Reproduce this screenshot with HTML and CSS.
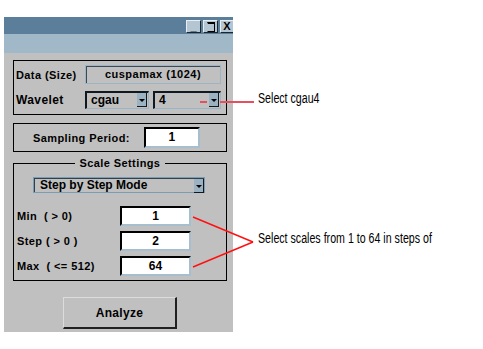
FILE: index.html
```html
<!DOCTYPE html>
<html lang="en">
<head>
  <meta charset="UTF-8">
  <title>Wavelet 1-D Continuous</title>
  <link rel="stylesheet" href="styles.css">
</head>
<body>
  <div class="page">
    <div class="window">
      <div class="titlebar">
        <div class="win-buttons">
          <span class="win-btn">_</span>
          <span class="win-btn max"></span>
          <span class="win-btn close">X</span>
        </div>
      </div>
      <div class="menuband"></div>
      <div class="client">
        <div class="frame data-frame">
          <span class="lbl">Data (Size)</span>
          <div class="readout">cuspamax (1024)</div>
          <span class="lbl lbl-big">Wavelet</span>
          <div class="popup-pair">
            <div class="popup family">cgau<span class="arrow"></span></div>
            <div class="popup order">4<span class="arrow"></span></div>
          </div>
        </div>

        <div class="frame sampling-frame">
          <span class="lbl">Sampling Period:</span>
          <div class="edit sampling">1</div>
        </div>

        <fieldset class="frame scale-frame">
          <legend>Scale Settings</legend>
          <div class="popup mode">Step by Step Mode<span class="arrow"></span></div>
          <div class="scale-rows">
            <span class="lbl">Min&nbsp; ( &gt; 0)</span>
            <div class="edit">1</div>
            <span class="lbl">Step ( &gt; 0 )</span>
            <div class="edit">2</div>
            <span class="lbl">Max&nbsp; ( &lt;= 512)</span>
            <div class="edit">64</div>
          </div>
        </fieldset>

        <div class="action-row">
          <button class="analyze">Analyze</button>
        </div>
      </div>
    </div>

    <!-- callout lines drawn over the window -->
    <svg class="callouts" width="483" height="349" viewBox="0 0 483 349">
      <line x1="200" y1="102" x2="207" y2="102" stroke="#e4505e" stroke-width="2"/>
      <line x1="220" y1="102" x2="254" y2="102" stroke="#e4505e" stroke-width="2"/>
      <line x1="193" y1="217" x2="253" y2="242" stroke="#ff1010" stroke-width="1.4"/>
      <line x1="193" y1="267" x2="253" y2="242" stroke="#ff1010" stroke-width="1.4"/>
    </svg>
    <div class="note note-wavelet">Select cgau4</div>
    <div class="note note-scales">Select scales from 1 to 64 in steps of</div>
  </div>
</body>
</html>
```

FILE: styles.css
```css
body {
  margin: 0;
  background: white;
  font-family: 'Liberation Sans', Arial, sans-serif;
  color: #000;
}
.page {
  position: relative;
  width: 483px;
  height: 349px;
  overflow: hidden;
}
.window {
  width: 229px;
  margin: 17px 0 0 4px;
}
.titlebar {
  height: 17px;
  background: #5b7f9b;
  display: flex;
  justify-content: flex-end;
  align-items: flex-start;
}
.win-buttons {
  display: flex;
  gap: 2px;
  margin-top: 3px;
}
.win-btn {
  width: 13px;
  height: 11px;
  background: #b4c6d2;
  border-top: 1px solid #e8eef2;
  border-left: 1px solid #e8eef2;
  border-right: 1px solid #1c2630;
  border-bottom: 1px solid #1c2630;
  font-size: 11px;
  font-weight: bold;
  line-height: 10px;
  text-align: center;
  position: relative;
}
.win-btn.max::after {
  content: "";
  position: absolute;
  left: 3px;
  top: 1px;
  width: 6px;
  height: 7px;
  border: 1px solid #000;
  border-top-width: 2px;
  border-left-color: transparent;
}
.win-btn.close {
  width: 12px;
  border-right: none;
}
.menuband {
  height: 19px;
  background: #a0b8c8;
}
.client {
  height: 279px;
  box-sizing: border-box;
  background: #c0c0c0;
  padding: 7px 6px 0 9px;
}
.frame {
  border: 1px solid #000;
}
.lbl {
  font-size: 11px;
  font-weight: bold;
  letter-spacing: 0.4px;
  white-space: nowrap;
}
.lbl-big {
  font-size: 12px;
}

/* data + wavelet */
.data-frame {
  display: grid;
  grid-template-columns: 69px 136px;
  grid-template-rows: 19px 18px;
  row-gap: 7px;
  align-items: center;
  padding: 4px 0 5px 2px;
}
.readout {
  height: 19px;
  box-sizing: border-box;
  border: 1px solid #9db4c4;
  box-shadow: inset 1px 1px 0 #3c4a56;
  font-size: 11px;
  font-weight: bold;
  letter-spacing: 0.5px;
  text-align: center;
  line-height: 17px;
}
.popup-pair {
  display: flex;
  gap: 4px;
}
.popup {
  position: relative;
  height: 18px;
  box-sizing: border-box;
  border-top: 2px solid #101820;
  border-left: 2px solid #101820;
  border-right: 1px solid #9db4c4;
  border-bottom: 1px solid #9db4c4;
  font-size: 12px;
  font-weight: bold;
  line-height: 15px;
  padding-left: 4px;
}
.popup.family {
  width: 64px;
}
.popup.order {
  width: 68px;
}
.arrow {
  position: absolute;
  right: 1px;
  top: 0;
  width: 10px;
  height: 14px;
  box-sizing: border-box;
  background: #9ab2c2;
  border-right: 1px solid #101820;
  border-bottom: 1px solid #101820;
}
.arrow::after {
  content: "";
  position: absolute;
  left: 2px;
  top: 6px;
  border-left: 3px solid transparent;
  border-right: 3px solid transparent;
  border-top: 3px solid #000;
}

/* sampling */
.sampling-frame {
  margin-top: 8px;
  display: flex;
  align-items: center;
  gap: 14px;
  padding: 3px 0 3px 19px;
}
.edit {
  height: 20px;
  box-sizing: border-box;
  background: white;
  border-top: 2px solid #000;
  border-left: 2px solid #000;
  border-right: 2px solid #a6bece;
  border-bottom: 2px solid #a6bece;
  font-size: 12px;
  font-weight: bold;
  text-align: center;
  line-height: 16px;
}
.edit.sampling {
  width: 56px;
  height: 21px;
  line-height: 17px;
}

/* scale settings */
.scale-frame {
  margin: 5px 0 0;
  padding: 7px 0 4px 0;
  min-width: 0;
}
.scale-frame legend {
  margin: 0 auto;
  padding: 0 5px;
  font-size: 11px;
  font-weight: bold;
  letter-spacing: 0.4px;
  line-height: 13px;
}
.popup.mode {
  width: 172px;
  height: 16px;
  margin-left: 19px;
  border: 1px solid #7c9cb2;
  box-shadow: inset 1px 1px 0 #30404c;
  line-height: 14px;
  padding-left: 6px;
}
.popup.mode .arrow {
  top: 1px;
  right: 0;
  height: 14px;
}
.scale-rows {
  display: grid;
  grid-template-columns: 103px 71px;
  grid-auto-rows: 20px;
  row-gap: 5px;
  align-items: center;
  margin-top: 13px;
  padding-left: 3px;
}

/* analyze */
.action-row {
  padding: 16px 0 0 50px;
}
.analyze {
  width: 114px;
  height: 32px;
  background: #c0c0c0;
  border-top: 1px solid #dcdcdc;
  border-left: 1px solid #dcdcdc;
  border-right: 2px solid #202020;
  border-bottom: 2px solid #202020;
  font-family: 'Liberation Sans', Arial, sans-serif;
  font-size: 12px;
  font-weight: bold;
  letter-spacing: 0.3px;
  padding: 0;
}

/* annotations */
.callouts {
  position: absolute;
  left: 0;
  top: 0;
}
.note {
  position: absolute;
  left: 258px;
  font-family: 'Liberation Sans', Arial, sans-serif;
  font-size: 14px;
  line-height: 16px;
  white-space: nowrap;
  transform: scaleX(0.76);
  transform-origin: left center;
}
.note-wavelet {
  top: 90px;
}
.note-scales {
  top: 230px;
}
```
